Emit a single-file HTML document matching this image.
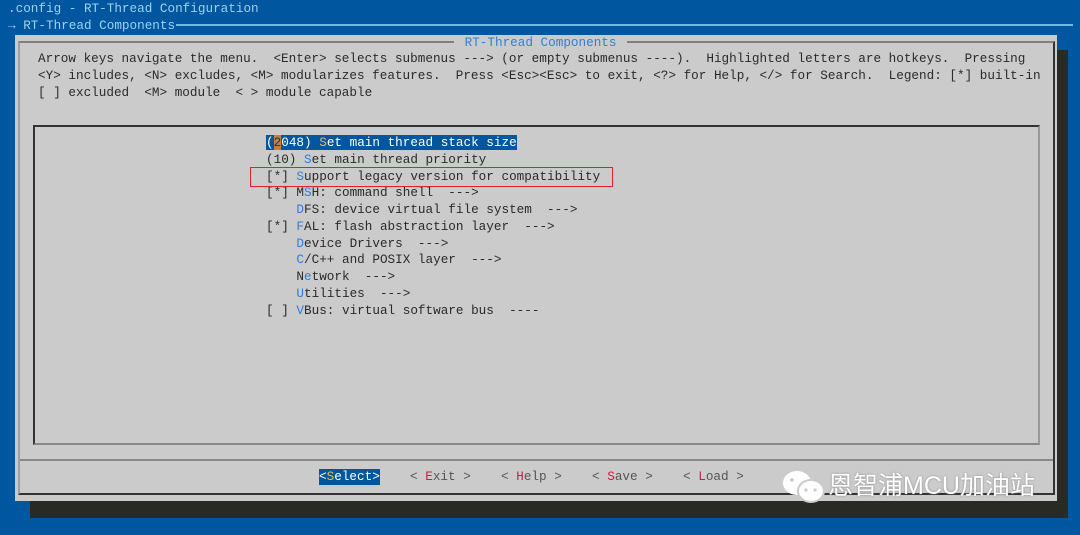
<!DOCTYPE html>
<html><head><meta charset="utf-8"><style>
body{margin:0;width:1080px;height:535px;background:#0156a0;overflow:hidden;position:relative;font-family:"Liberation Mono",monospace;font-size:12.67px;}
.t{position:absolute;white-space:pre;line-height:16px;}
.w{color:#9ad2f2}
.k{color:#2a2a2a}
.h{color:#2f7fd6}
.r{color:#c0204a}
.y{color:#e0c060}
.b{color:#555}
</style></head><body>
<div class="t w" style="left:8px;top:1px">.config - RT-Thread Configuration</div>
<div class="t w" style="left:8px;top:18px">→ RT-Thread Components</div>
<div style="position:absolute;left:176px;top:24px;width:897px;height:2px;background:#6cb8e6"></div>
<div style="position:absolute;left:30px;top:50px;width:1038px;height:468px;background:#2a2a24"></div>
<div style="position:absolute;left:15px;top:35px;width:1042px;height:466px;background:#cbcbcb"></div>
<div style="position:absolute;left:18px;top:41px;width:1033px;height:450px;border-top:2px solid #808080;border-left:2px solid #a0a0a0;border-right:2px solid #333;border-bottom:2px solid #333"></div>
<div style="position:absolute;left:20px;top:459px;width:1033px;height:2px;background:#888"></div>
<div style="position:absolute;left:33px;top:125px;width:1003px;height:316px;border-top:2px solid #333;border-left:2px solid #333;border-right:2px solid #999;border-bottom:2px solid #888"></div>
<div class="t h" style="left:454px;top:35px;background:#cbcbcb;padding:0 3px"> RT-Thread Components </div>
<div class="t k" style="left:38px;top:51px;line-height:16.8px">Arrow keys navigate the menu.  &lt;Enter&gt; selects submenus ---&gt; (or empty submenus ----).  Highlighted letters are hotkeys.  Pressing
&lt;Y&gt; includes, &lt;N&gt; excludes, &lt;M&gt; modularizes features.  Press &lt;Esc&gt;&lt;Esc&gt; to exit, &lt;?&gt; for Help, &lt;/&gt; for Search.  Legend: [*] built-in
[ ] excluded  &lt;M&gt; module  &lt; &gt; module capable</div>
<div class="t k" style="left:266px;top:135px;line-height:16.75px"><span style="background:#0156a0;color:#fff">(<span style="background:#c08040;color:#333">2</span>048) <span class="y">S</span>et main thread stack size</span>
(10) <span class="h">S</span>et main thread priority
[*] <span class="h">S</span>upport legacy version for compatibility
[*] M<span class="h">S</span>H: command shell  ---&gt;
    <span class="h">D</span>FS: device virtual file system  ---&gt;
[*] <span class="h">F</span>AL: flash abstraction layer  ---&gt;
    <span class="h">D</span>evice Drivers  ---&gt;
    <span class="h">C</span>/C++ and POSIX layer  ---&gt;
    N<span class="h">e</span>twork  ---&gt;
    <span class="h">U</span>tilities  ---&gt;
[ ] <span class="h">V</span>Bus: virtual software bus  ----</div>
<div style="position:absolute;left:250px;top:167px;width:361px;height:18px;border:1.5px solid #e02030"></div>
<div class="t" style="left:319px;top:469px;background:#0156a0;color:#fff">&lt;<span class="y">S</span>elect&gt;</div>
<div class="t b" style="left:410px;top:469px">&lt; <span class="r">E</span>xit &gt;</div>
<div class="t b" style="left:501px;top:469px">&lt; <span class="r">H</span>elp &gt;</div>
<div class="t b" style="left:592px;top:469px">&lt; <span class="r">S</span>ave &gt;</div>
<div class="t b" style="left:683px;top:469px">&lt; <span class="r">L</span>oad &gt;</div>
<svg style="position:absolute;left:782px;top:470px" width="46" height="34" viewBox="0 0 46 34">
<ellipse cx="15" cy="13" rx="14" ry="12" fill="#fff"/>
<ellipse cx="29" cy="21" rx="13" ry="11" fill="#fff" stroke="#cbcbcb" stroke-width="2"/>
<circle cx="10" cy="10" r="1.8" fill="#cbcbcb"/><circle cx="24" cy="20" r="1.6" fill="#cbcbcb"/><circle cx="33" cy="20" r="1.6" fill="#cbcbcb"/>
</svg>
<div class="t" style="left:828px;top:471px;font-family:'Liberation Sans','Noto Sans CJK SC',sans-serif;font-size:25px;line-height:30px;color:#fff;text-shadow:0 0 2px #888">恩智浦MCU加油站</div>
</body></html>
